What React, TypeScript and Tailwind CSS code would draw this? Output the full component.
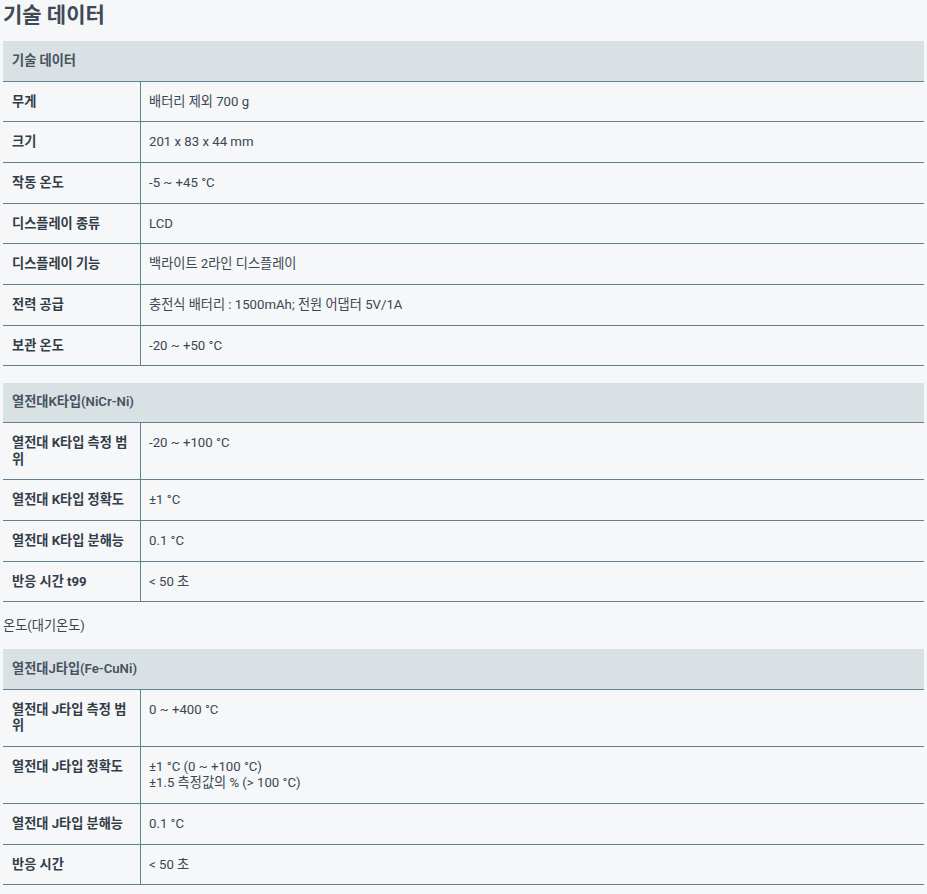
const FONT = { fontFamily: 'Roboto, "Noto Sans CJK KR", sans-serif' };

type Row = { label: string; value: string[] };

const tech: Row[] = [
  { label: "무게", value: ["배터리 제외 700 g"] },
  { label: "크기", value: ["201 x 83 x 44 mm"] },
  { label: "작동 온도", value: ["-5 ~ +45 °C"] },
  { label: "디스플레이 종류", value: ["LCD"] },
  { label: "디스플레이 기능", value: ["백라이트 2라인 디스플레이"] },
  { label: "전력 공급", value: ["충전식 배터리 : 1500mAh; 전원 어댑터 5V/1A"] },
  { label: "보관 온도", value: ["-20 ~ +50 °C"] },
];

const kType: Row[] = [
  { label: "열전대 K타입 측정 범위", value: ["-20 ~ +100 °C"] },
  { label: "열전대 K타입 정확도", value: ["±1 °C"] },
  { label: "열전대 K타입 분해능", value: ["0.1 °C"] },
  { label: "반응 시간 t99", value: ["< 50 초"] },
];

const jType: Row[] = [
  { label: "열전대 J타입 측정 범위", value: ["0 ~ +400 °C"] },
  { label: "열전대 J타입 정확도", value: ["±1 °C (0 ~ +100 °C)", "±1.5 측정값의 % (> 100 °C)"] },
  { label: "열전대 J타입 분해능", value: ["0.1 °C"] },
  { label: "반응 시간", value: ["< 50 초"] },
];

function SpecTable({ title, rows }: { title: string; rows: Row[] }) {
  return (
    <div className="w-[921px] text-[13.2px] leading-[16.3px]">
      <div className="h-[40.5px] bg-[#d9e1e4] border-b border-[#62808f] px-[9px] flex items-center font-semibold text-[#46525d]">
        {title}
      </div>
      {rows.map((r) => (
        <div key={r.label} className="grid grid-cols-[138px_1fr] border-b border-[#62808f]">
          <div className="border-r border-[#62808f] pl-[9px] pr-2 pt-[12px] pb-[11.4px] font-bold text-[#333d47]">
            {r.label}
          </div>
          <div className="pl-2 pt-[12px] pb-[11.4px] text-[#3c4650]">
            {r.value.map((v) => (
              <div key={v}>{v}</div>
            ))}
          </div>
        </div>
      ))}
    </div>
  );
}

export default function App() {
  return (
    <div className="min-h-[894px] bg-[#f5f7f9] pl-[3px] pt-[1px]" style={FONT}>
      <h2 className="text-[21px] leading-[28px] font-bold text-[#3e4a55] mb-[12px]">기술 데이터</h2>
      <SpecTable title="기술 데이터" rows={tech} />
      <div className="h-[16.5px]" />
      <SpecTable title="열전대K타입(NiCr-Ni)" rows={kType} />
      <p className="text-[13.2px] leading-[17px] text-[#3c4650] h-[47px] flex items-center">온도(대기온도)</p>
      <SpecTable title="열전대J타입(Fe-CuNi)" rows={jType} />
    </div>
  );
}
